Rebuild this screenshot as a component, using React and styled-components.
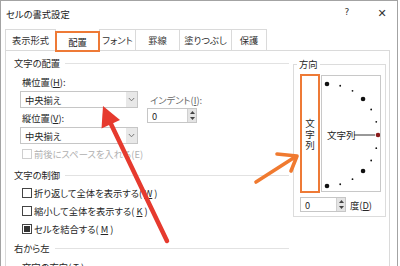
import React from 'react';
import styled, { createGlobalStyle } from 'styled-components';

const Global = createGlobalStyle`
  html, body { margin: 0; padding: 0; background: #fff; }
  body {
    font-family: "Noto Sans CJK JP", "Noto Sans", sans-serif;
    font-feature-settings: "palt";
    color: #262626;
    font-size: 9.3px;
  }
  * { box-sizing: border-box; }
`;

const Root = styled.div`
  position: relative;
  width: 400px;
  height: 266px;
  overflow: hidden;
`;

const Dialog = styled.div`
  width: 398px;
  height: 266px;
  border: 1px solid #a3a3a3;
  border-bottom: none;
  background: #fff;
  display: flex;
  flex-direction: column;
`;

const TitleBar = styled.div`
  height: 25px;
  flex: none;
  display: flex;
  align-items: center;
  padding-left: 5px;
  color: #222;
`;

const TitleButtons = styled.div`
  margin-left: auto;
  display: flex;
  gap: 5px;
`;

const TitleBtn = styled.div`
  width: 30px;
  text-align: center;
  font-family: "DejaVu Sans", sans-serif;
  font-size: ${p => p.$big ? '11px' : '9px'};
  color: #333;
`;

const Tabs = styled.div`
  height: 24px;
  flex: none;
  display: flex;
  align-items: flex-end;
  padding-left: 4px;
`;

const Tab = styled.div`
  width: ${p => p.$w}px;
  height: 21px;
  margin-right: -1px;
  display: flex;
  align-items: center;
  justify-content: center;
  border: 1px solid #dadada;
  border-bottom: none;
  background: #fff;
  white-space: nowrap;
  color: #333;
  ${p => p.$active && `
    border: 2px solid #ee7a36;
    margin-bottom: -2px;
    position: relative;
    z-index: 2;
    color: #222;
  `}
`;

const Panel = styled.div`
  margin-left: 4px;
  width: 385px;
  flex: 1;
  border: 1px solid #dadada;
  border-bottom: none;
  padding: 6px 0 0 8px;
  display: flex;
  align-items: flex-start;
`;

const LeftCol = styled.div`
  width: 275px;
  display: flex;
  flex-direction: column;
`;

const Heading = styled.div`
  height: 12px;
  line-height: 12px;
  display: flex;
  align-items: center;
  margin-top: ${p => p.$mt || 0}px;
  white-space: nowrap;
  &::after {
    content: "";
    flex: 1;
    margin-left: 5px;
    border-top: 1px solid #e2e2e2;
  }
`;

const AlignGrid = styled.div`
  margin: 7px 0 0 6px;
  display: grid;
  grid-template-columns: 118px 50px;
  grid-template-rows: 15px 17px 19px 17px;
  column-gap: 9px;
`;

const FieldLabel = styled.div`
  height: 12px;
  line-height: 12px;
  margin-left: ${p => p.$ml ?? 2}px;
  align-self: ${p => p.$align || 'start'};
  white-space: nowrap;
  color: ${p => p.$muted ? '#666' : '#262626'};
`;

const Select = styled.div`
  height: 17px;
  border: 1px solid #c6c6c6;
  display: flex;
  align-items: stretch;
  background: #fff;
`;

const SelectText = styled.div`
  flex: 1;
  padding-left: 4px;
  display: flex;
  align-items: center;
`;

const SelectArrow = styled.div`
  width: 11px;
  background: #e8e8e8;
  display: flex;
  align-items: center;
  justify-content: center;
`;

const Spinner = styled.div`
  width: ${p => p.$w}px;
  height: 15px;
  border: 1px solid #c6c6c6;
  display: flex;
  align-self: start;
  background: #fff;
`;

const SpinText = styled.div`
  flex: 1;
  padding-left: 4px;
  display: flex;
  align-items: center;
`;

const SpinButtons = styled.div`
  width: 9px;
  display: flex;
  flex-direction: column;
  background: #e4e4e4;
  border-left: 1px solid #d0d0d0;
`;

const SpinHalf = styled.div`
  flex: 1;
  display: flex;
  align-items: center;
  justify-content: center;
`;

const CheckRow = styled.div`
  height: ${p => p.$h || 18}px;
  margin-top: ${p => p.$mt || 0}px;
  padding-left: ${p => p.$pl ?? 8}px;
  display: flex;
  align-items: center;
  gap: 2px;
  white-space: nowrap;
  color: ${p => p.$disabled ? '#b0b0b0' : '#262626'};
`;

const Box = styled.div`
  width: 10px;
  height: 10px;
  border: 1px solid ${p => p.$disabled ? '#cfcfcf' : '#444'};
  background: #fff;
  display: flex;
  align-items: center;
  justify-content: center;
  flex: none;
  &::after {
    content: "";
    display: ${p => p.$checked ? 'block' : 'none'};
    width: 6px;
    height: 6px;
    background: #333;
  }
`;

const Group = styled.div`
  position: relative;
  margin: 7px 0 0 4px;
  width: 93px;
  height: 153px;
  border: 1px solid #dcdcdc;
  padding: 9px 0 0 6px;
`;

const Legend = styled.span`
  position: absolute;
  top: -7px;
  left: 3px;
  padding: 0 2px;
  background: #fff;
  line-height: 12px;
`;

const OrientRow = styled.div`
  display: flex;
  gap: 1px;
  align-items: flex-start;
`;

const VerticalText = styled.div`
  width: 20px;
  height: 119px;
  border: 2px solid #ee7a36;
  display: flex;
  flex-direction: column;
  align-items: center;
  justify-content: center;
  padding-top: 1px;
  font-size: 9.5px;
  line-height: 11px;
`;

const Dial = styled.div`
  width: 60px;
  height: 117px;
  margin-top: 1px;
  border: 1px solid #c8c8c8;
  display: flex;
`;

const DegreeRow = styled.div`
  margin-top: 4px;
  display: flex;
  align-items: center;
  gap: 4px;
`;

const Overlay = styled.svg`
  position: absolute;
  left: 0;
  top: 0;
  pointer-events: none;
`;

const Chevron = () => (
  <svg width="7" height="5" viewBox="0 0 7 5">
    <path d="M0.8 1 L3.5 3.8 L6.2 1" fill="none" stroke="#777" strokeWidth="1" />
  </svg>
);

const Tri = ({ up }) => (
  <svg width="5" height="3" viewBox="0 0 5 3">
    <path d={up ? 'M0 3 L2.5 0 L5 3 Z' : 'M0 0 L2.5 3 L5 0 Z'} fill="#444" />
  </svg>
);

const SpinBox = ({ w, value }) => (
  <Spinner $w={w}>
    <SpinText>{value}</SpinText>
    <SpinButtons>
      <SpinHalf><Tri up /></SpinHalf>
      <SpinHalf><Tri /></SpinHalf>
    </SpinButtons>
  </Spinner>
);

const Dropdown = ({ value }) => (
  <Select>
    <SelectText>{value}</SelectText>
    <SelectArrow><Chevron /></SelectArrow>
  </Select>
);

const DialDrawing = () => {
  const cx = 5, cy = 59, r = 51;
  const angles = [90, 75, 60, 45, 30, 15, -15, -30, -45, -60, -75, -90];
  return (
    <svg width="58" height="115" viewBox="0 0 58 115">
      {angles.map(a => {
        const rad = (a * Math.PI) / 180;
        const big = Math.abs(a) === 90 || Math.abs(a) === 45;
        return (
          <circle key={a} cx={cx + r * Math.cos(rad)} cy={cy - r * Math.sin(rad)} r={big ? 2.3 : 0.9} fill="#111" />
        );
      })}
      <text x="5" y="62.5" fontSize="9.5" fill="#222" fontFamily='"Noto Sans CJK JP", sans-serif'>文字列</text>
      <line x1="32" y1="59" x2="53" y2="59" stroke="#333" strokeWidth="1" />
      <circle cx={cx + r} cy={cy} r="2.3" fill="#8a1c1c" />
    </svg>
  );
};

const tabs = [
  { label: '表示形式', w: 51 },
  { label: '配置', w: 45, active: true },
  { label: 'フォント', w: 37 },
  { label: '罫線', w: 45 },
  { label: '塗りつぶし', w: 53 },
  { label: '保護', w: 36 },
];

export default function App() {
  return (
    <Root>
      <Global />
      <Dialog>
        <TitleBar>
          セルの書式設定
          <TitleButtons>
            <TitleBtn>?</TitleBtn>
            <TitleBtn $big>✕</TitleBtn>
          </TitleButtons>
        </TitleBar>
        <Tabs>
          {tabs.map(t => (
            <Tab key={t.label} $w={t.w} $active={t.active}>{t.label}</Tab>
          ))}
        </Tabs>
        <Panel>
          <LeftCol>
            <Heading>文字の配置</Heading>
            <AlignGrid>
              <FieldLabel>横位置(<u>H</u>):</FieldLabel>
              <div />
              <Dropdown value="中央揃え" />
              <FieldLabel $ml={3} $align="center" $muted>インデント(<u>I</u>):</FieldLabel>
              <FieldLabel $align="center">縦位置(<u>V</u>):</FieldLabel>
              <SpinBox w={50} value="0" />
              <Dropdown value="中央揃え" />
              <div />
            </AlignGrid>
            <CheckRow $h={12} $mt={4} $disabled>
              <Box $disabled />
              前後にスペースを入れる(E)
            </CheckRow>
            <Heading $mt={9}>文字の制御</Heading>
            <CheckRow $mt={3}>
              <Box />
              折り返して全体を表示する(<u>W</u>)
            </CheckRow>
            <CheckRow>
              <Box />
              縮小して全体を表示する(<u>K</u>)
            </CheckRow>
            <CheckRow>
              <Box $checked />
              セルを結合する(<u>M</u>)
            </CheckRow>
            <Heading $mt={4}>右から左</Heading>
            <CheckRow $h={12} $mt={7}>
              文字の方向(<u>T</u>):
            </CheckRow>
          </LeftCol>
          <Group>
            <Legend>方向</Legend>
            <OrientRow>
              <VerticalText>
                <span>文</span>
                <span>字</span>
                <span>列</span>
              </VerticalText>
              <Dial><DialDrawing /></Dial>
            </OrientRow>
            <DegreeRow>
              <SpinBox w={46} value="0" />
              <span>度(<u>D</u>)</span>
            </DegreeRow>
          </Group>
        </Panel>
      </Dialog>
      <Overlay width="400" height="266" viewBox="0 0 400 266">
        <line x1="167" y1="241" x2="111" y2="124" stroke="#e63a2e" strokeWidth="4.5" strokeLinecap="round" />
        <polygon points="103,106 120,120 101.5,128.5" fill="#e63a2e" />
        <polyline points="256,182 295,157" fill="none" stroke="#f07a30" strokeWidth="3.6" strokeLinecap="round" />
        <polyline points="277,154 297,156 291,171" fill="none" stroke="#f07a30" strokeWidth="3.6" strokeLinecap="round" strokeLinejoin="round" />
      </Overlay>
    </Root>
  );
}
